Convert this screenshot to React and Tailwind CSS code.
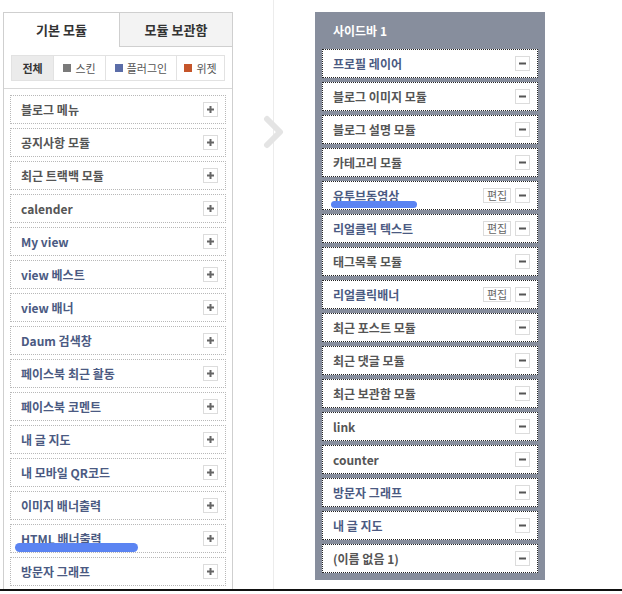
import { useState } from "react"

const FONT = { fontFamily: '"Noto Sans CJK KR", "Noto Sans", sans-serif' }

const leftModules = [
  { name: "블로그 메뉴", kind: "skin" },
  { name: "공지사항 모듈", kind: "skin" },
  { name: "최근 트랙백 모듈", kind: "skin" },
  { name: "calender", kind: "skin" },
  { name: "My view", kind: "plugin" },
  { name: "view 베스트", kind: "plugin" },
  { name: "view 배너", kind: "plugin" },
  { name: "Daum 검색창", kind: "plugin" },
  { name: "페이스북 최근 활동", kind: "plugin" },
  { name: "페이스북 코멘트", kind: "plugin" },
  { name: "내 글 지도", kind: "plugin" },
  { name: "내 모바일 QR코드", kind: "plugin" },
  { name: "이미지 배너출력", kind: "plugin" },
  { name: "HTML 배너출력", kind: "plugin", mark: true },
  { name: "방문자 그래프", kind: "plugin" },
  { name: "", kind: "skin" },
]

const sidebarModules = [
  { name: "프로필 레이어", kind: "plugin" },
  { name: "블로그 이미지 모듈", kind: "skin" },
  { name: "블로그 설명 모듈", kind: "skin" },
  { name: "카테고리 모듈", kind: "skin" },
  { name: "유투브동영상", kind: "plugin", edit: true, mark: true },
  { name: "리얼클릭 텍스트", kind: "plugin", edit: true },
  { name: "태그목록 모듈", kind: "skin" },
  { name: "리얼클릭배너", kind: "plugin", edit: true },
  { name: "최근 포스트 모듈", kind: "skin" },
  { name: "최근 댓글 모듈", kind: "skin" },
  { name: "최근 보관함 모듈", kind: "skin" },
  { name: "link", kind: "skin" },
  { name: "counter", kind: "skin" },
  { name: "방문자 그래프", kind: "plugin" },
  { name: "내 글 지도", kind: "plugin" },
  { name: "(이름 없음 1)", kind: "skin" },
]

function SmallButton({ children, wide }) {
  return (
    <span
      className={`flex h-[15px] items-center justify-center border border-[#dcdcdc] bg-white text-[#666] ${wide ? "w-[28px] text-[11px] font-normal" : "w-[15px]"}`}
    >
      {children}
    </span>
  )
}

function Plus() {
  return (
    <svg width="7" height="7" viewBox="0 0 7 7">
      <path d="M3.5 0v7M0 3.5h7" stroke="#666" strokeWidth="2" />
    </svg>
  )
}

function Minus() {
  return (
    <svg width="7" height="3" viewBox="0 0 7 3">
      <path d="M0 1.5h7" stroke="#555" strokeWidth="2" />
    </svg>
  )
}

function ModuleRow({ item, dark }) {
  const color = item.kind === "plugin" ? "text-[#4b5a82]" : "text-[#555]"
  return (
    <div
      className={`relative flex h-[29px] shrink-0 items-center justify-between bg-white pl-[10px] pr-[7px] border border-dotted ${dark ? "border-[#222]" : "border-[#b8b8b8]"}`}
    >
      <span className={`text-[12px] font-bold leading-none ${color}`}>{item.name}</span>
      <div className="flex items-center gap-[4px]">
        {item.edit && <SmallButton wide>편집</SmallButton>}
        {item.name !== "" && <SmallButton>{dark ? <Minus /> : <Plus />}</SmallButton>}
      </div>
      {item.mark && (
        <span
          className={`absolute rounded-full bg-[#5b84f2] ${dark ? "left-[8px] top-[19px] h-[7px] w-[86px]" : "left-[4px] top-[18px] h-[9px] w-[123px]"}`}
        />
      )}
    </div>
  )
}

export default function App() {
  const [tab] = useState(0)

  return (
    <div className="relative h-[594px] w-[622px] overflow-hidden bg-white" style={FONT}>
      <div className="flex h-full items-start">
        {/* left panel */}
        <div className="ml-[3px] mt-[12px] flex h-[600px] w-[230px] flex-col border-x border-t border-[#cfcfcf]">
          <div className="flex h-[34px] shrink-0">
            <div className={`flex w-[115px] items-center justify-center text-[13px] font-bold text-[#333] ${tab === 0 ? "bg-white" : ""}`}>
              기본 모듈
            </div>
            <div className="flex flex-1 items-center justify-center border-b border-l border-[#cfcfcf] bg-[#f3f3f3] text-[13px] font-bold text-[#333]">
              모듈 보관함
            </div>
          </div>
          <div className="shrink-0 border-b border-[#d8d8d8] px-[7px] pb-[7px] pt-[8px]">
            <div className="flex h-[26px] border border-[#e2e2e2] text-[11px] text-[#555]">
              <span className="flex w-[41px] items-center justify-center bg-[#ebebeb] font-bold text-[#333]">전체</span>
              <span className="flex w-[52px] items-center justify-center gap-[4px] border-l border-[#e2e2e2]">
                <i className="h-[8px] w-[8px] bg-[#7a7a7a]" />스킨
              </span>
              <span className="flex w-[71px] items-center justify-center gap-[4px] border-l border-[#e2e2e2]">
                <i className="h-[8px] w-[8px] bg-[#5b6da8]" />플러그인
              </span>
              <span className="flex flex-1 items-center justify-center gap-[4px] border-l border-[#e2e2e2]">
                <i className="h-[8px] w-[8px] bg-[#c5552a]" />위젯
              </span>
            </div>
          </div>
          <div className="flex flex-col gap-[4px] px-[6px] pt-[6px]">
            {leftModules.map((m, i) => (
              <ModuleRow key={i} item={m} />
            ))}
          </div>
        </div>

        {/* divider column */}
        <div className="relative h-full w-[41px] border-r border-[#ececec]">
          <svg className="absolute left-[30px] top-[115px]" width="23" height="34" viewBox="0 0 23 34">
            <path d="M4 4l13 13L4 30" fill="none" stroke="#e4e4e4" strokeWidth="6" strokeLinecap="round" strokeLinejoin="round" />
          </svg>
        </div>

        {/* sidebar panel */}
        <div className="ml-[41px] mt-[12px] flex w-[230px] flex-col bg-[#878e9d] px-[7px] pb-[7px]">
          <div className="flex h-[37px] items-center pl-[11px] text-[12px] font-bold text-white">사이드바 1</div>
          <div className="flex flex-col gap-[4px]">
            {sidebarModules.map((m, i) => (
              <ModuleRow key={i} item={m} dark />
            ))}
          </div>
        </div>
      </div>

      {/* bottom edge of window */}
      <div className="absolute bottom-0 left-0 h-[5px] w-full border-t-2 border-[#111] bg-white" />
    </div>
  )
}
